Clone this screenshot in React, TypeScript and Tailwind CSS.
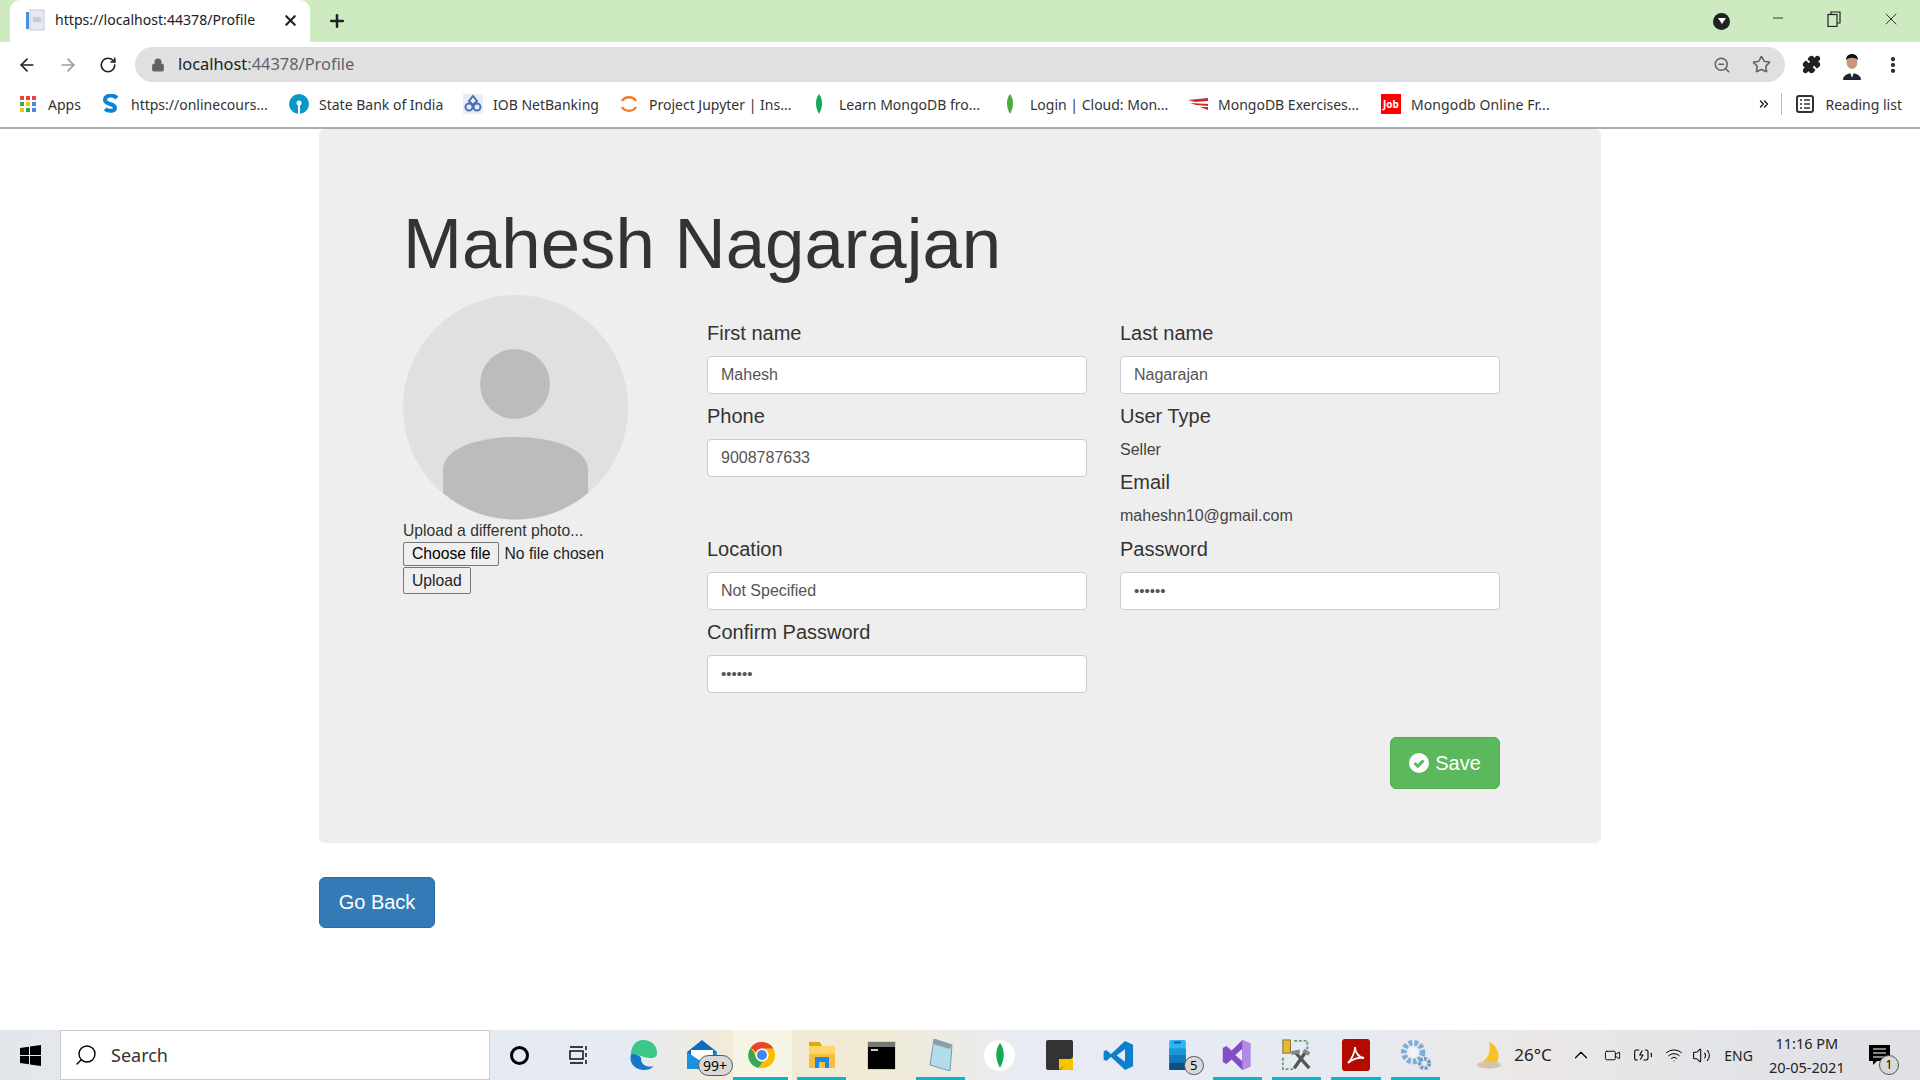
import { ArrowLeft, ArrowRight, ChevronUp, Lock, MoreVertical, Plus, RotateCw, Search, Star, Volume2, Wifi, X, ZoomOut, Minus, ChevronsRight, Puzzle, Video, BatteryCharging } from "lucide-react";
import type { ReactNode } from "react";

const ui = "font-['Noto_Sans','Open_Sans',sans-serif]";

const bookmarks: { label: string; box: string; icon: ReactNode }[] = [
  {
    label: "Apps",
    box: "w-[33px] mr-[20px]",
    icon: (
      <svg width="18" height="18" viewBox="0 0 18 18">
        <rect x="1" y="1" width="4" height="4" fill="#ea4335" />
        <rect x="7" y="1" width="4" height="4" fill="#ea4335" />
        <rect x="13" y="1" width="4" height="4" fill="#ea4335" />
        <rect x="1" y="7" width="4" height="4" fill="#34a853" />
        <rect x="7" y="7" width="4" height="4" fill="#fbbc05" />
        <rect x="13" y="7" width="4" height="4" fill="#4285f4" />
        <rect x="1" y="13" width="4" height="4" fill="#fbbc05" />
        <rect x="7" y="13" width="4" height="4" fill="#34a853" />
        <rect x="13" y="13" width="4" height="4" fill="#4285f4" />
      </svg>
    ),
  },
  {
    label: "https://onlinecours...",
    box: "w-[137px] mr-[21px]",
    icon: (
      <svg width="18" height="20" viewBox="0 0 18 20">
        <path d="M15 4 C11 0 3 1 3 6 C3 11 13 9 13 14 C13 17 7 18 3 15" fill="none" stroke="#0a84d6" strokeWidth="4" />
      </svg>
    ),
  },
  {
    label: "State Bank of India",
    box: "w-[124px] mr-[20px]",
    icon: (
      <svg width="20" height="20" viewBox="0 0 20 20">
        <circle cx="10" cy="10" r="10" fill="#0a98c9" />
        <circle cx="10" cy="9" r="2.5" fill="#fff" />
        <rect x="9" y="10" width="2" height="10" fill="#fff" />
      </svg>
    ),
  },
  {
    label: "IOB NetBanking",
    box: "w-[106px] mr-[20px]",
    icon: (
      <svg width="20" height="20" viewBox="0 0 20 20">
        <rect width="20" height="20" fill="#e8edf5" />
        <path d="M10 2 L14 7 L10 11 L6 7 Z" fill="none" stroke="#4a6fb5" strokeWidth="2" />
        <circle cx="6" cy="13" r="3.5" fill="none" stroke="#4a6fb5" strokeWidth="2" />
        <circle cx="14" cy="13" r="3.5" fill="none" stroke="#4a6fb5" strokeWidth="2" />
      </svg>
    ),
  },
  {
    label: "Project Jupyter | Ins...",
    box: "w-[140px] mr-[20px]",
    icon: (
      <svg width="20" height="20" viewBox="0 0 20 20">
        <path d="M3 7 C6 2 14 2 17 7" fill="none" stroke="#f37726" strokeWidth="2.4" />
        <path d="M3 13 C6 18 14 18 17 13" fill="none" stroke="#f37726" strokeWidth="2.4" />
      </svg>
    ),
  },
  {
    label: "Learn MongoDB fro...",
    box: "w-[142px] mr-[19px]",
    icon: (
      <svg width="20" height="20" viewBox="0 0 20 20">
        <path d="M10 0 C14 5 14 13 10 20 C6 13 6 5 10 0 Z" fill="#13aa52" />
      </svg>
    ),
  },
  {
    label: "Login | Cloud: Mon...",
    box: "w-[137px] mr-[21px]",
    icon: (
      <svg width="20" height="20" viewBox="0 0 20 20">
        <path d="M10 0 C14 5 14 13 10 20 C6 13 6 5 10 0 Z" fill="#4fa83d" />
      </svg>
    ),
  },
  {
    label: "MongoDB Exercises...",
    box: "w-[141px] mr-[22px]",
    icon: (
      <svg width="20" height="20" viewBox="0 0 20 20">
        <path d="M0 6 L20 4 L20 7 L7 8 Z M2 9 L20 10 L20 12 L8 11 Z M12 13 L20 13 L20 16 Z" fill="#d8232a" />
      </svg>
    ),
  },
  {
    label: "Mongodb Online Fr...",
    box: "w-[141px] tracking-[0.1px]",
    icon: (
      <div className="flex h-[20px] w-[20px] items-center justify-center bg-[#ff0000] text-[10px] font-bold text-white">Job</div>
    ),
  },
];

function AppSlot({ children, on = false, tint = false }: { children: ReactNode; on?: boolean; tint?: boolean }) {
  return (
    <div className={`relative flex h-[50px] w-[59.4px] shrink-0 items-center justify-center ${tint ? "bg-[#f6f4e4]" : ""}`}>
      {children}
      {on && <div className={`absolute bottom-0 h-[3px] bg-[#0db4c4] ${tint ? "left-0 right-[4px]" : "left-[5px] right-[5px]"}`} />}
    </div>
  );
}

function Field({ label, value, password = false }: { label: string; value: string; password?: boolean }) {
  return (
    <div className="mb-[9px]">
      <label className="mb-[9px] block text-[20px] leading-[27px] text-[#333]">{label}</label>
      <div className={`flex h-[38px] items-center rounded-[4px] border border-[#ccc] bg-white px-[13px] text-[#555] ${password ? "text-[15px]" : "text-[16px]"}`}>
        {password ? "••••••" : value}
      </div>
    </div>
  );
}

function Browser() {
  return (
    <div className={`${ui} shrink-0 text-[#202124]`}>
      <div className="flex h-[42px] items-end bg-[#cdeac0]">
        <div className="ml-[10px] flex h-[42px] w-[300px] items-center rounded-t-[10px] bg-white pb-[2px] pl-[15px] pr-[11px]">
          <svg width="20" height="22" viewBox="0 0 20 22" className="shrink-0">
            <rect x="1" y="3" width="3" height="17" fill="#4a90d9" />
            <rect x="5" y="1" width="14" height="20" fill="#e4e9f0" stroke="#c3ccd8" />
            <rect x="8" y="8" width="8" height="5" fill="#c3ccd8" />
          </svg>
          <span className="ml-[10px] flex-1 text-[14.1px] whitespace-nowrap">https://localhost:44378/Profile</span>
          <X size={17} strokeWidth={3} />
        </div>
        <div className="ml-[12px] flex h-[42px] w-[30px] items-center justify-center">
          <Plus size={20} strokeWidth={3} />
        </div>
        <div className="flex-1" />
        <div className="flex h-[42px] items-center">
          <div className="mr-[20px] flex h-[17px] w-[17px] items-center justify-center rounded-full bg-[#202124]">
            <div className="h-0 w-0 border-x-[4px] border-t-[6px] border-x-transparent border-t-white" />
          </div>
          <div className="-mt-[6px] flex w-[56px] justify-center"><Minus size={16} strokeWidth={1.3} /></div>
          <div className="-mt-[5px] flex w-[56px] justify-center">
            <svg width="14" height="16" viewBox="0 0 14 16" fill="none" stroke="#202124" strokeWidth="1.2">
              <rect x="1" y="3.5" width="9" height="12" />
              <path d="M4 3.5 V1 H13 V12 H10" />
            </svg>
          </div>
          <div className="-mt-[5px] flex w-[58px] justify-center"><X size={20} strokeWidth={1.1} /></div>
        </div>
      </div>
      <div className="flex h-[45px] items-center bg-white">
        <div className="flex w-[135px] items-center gap-[21px] pl-[17px]">
          <ArrowLeft size={20} strokeWidth={2} />
          <ArrowRight size={20} strokeWidth={2} className="text-[#9a9a9a]" />
          <RotateCw size={18} strokeWidth={2.2} />
        </div>
        <div className="flex h-[35px] flex-1 items-center rounded-full bg-[#e0e0e0] pl-[16px] pr-[14px]">
          <Lock size={14} fill="#5f6368" className="text-[#5f6368]" />
          <span className="ml-[13px] flex-1 text-[16.4px]">
            localhost<span className="text-[#5f6368]">:44378/Profile</span>
          </span>
          <ZoomOut size={18} className="mr-[21px] text-[#5f6368]" />
          <Star size={19} className="text-[#5f6368]" />
        </div>
        <div className="flex w-[135px] items-center justify-around px-[8px]">
          <Puzzle size={19} fill="#202124" />
          <svg width="24" height="30" viewBox="0 0 24 30">
            <circle cx="12" cy="15" r="12" fill="#fff" />
            <ellipse cx="12" cy="12" rx="5.5" ry="7" fill="#c9977c" />
            <path d="M6 10 C6 2 18 2 18 10 C15 7 9 7 6 10 Z" fill="#111" />
            <path d="M3 30 C3 21 21 21 21 30 Z" fill="#1d2430" />
            <path d="M10 22 L14 22 L12 28 Z" fill="#fff" />
          </svg>
          <MoreVertical size={20} strokeWidth={3} />
        </div>
      </div>
      <div className="flex h-[42px] items-center border-b-[2px] border-[#aaa] bg-white pb-[6px] pl-[18px]">
        {bookmarks.map((b) => (
          <div key={b.label} className="flex items-center">
            <div className="flex w-[20px] items-center justify-center">{b.icon}</div>
            <span className={`ml-[10px] text-[14px] whitespace-nowrap text-[#333] ${b.box}`}>{b.label}</span>
          </div>
        ))}
        <div className="flex-1" />
        <ChevronsRight size={14} strokeWidth={2.5} />
        <div className="ml-[10px] mr-[14px] h-[22px] w-px bg-[#bbb]" />
        <svg width="18" height="18" viewBox="0 0 18 18">
          <rect x="1" y="1" width="16" height="16" rx="2" fill="none" stroke="#333" strokeWidth="2" />
          <path d="M4 5h2M8 5h6M4 9h2M8 9h6M4 13h2M8 13h6" stroke="#333" strokeWidth="1.5" />
        </svg>
        <span className="ml-[11px] mr-[18px] text-[14px] text-[#333]">Reading list</span>
      </div>
    </div>
  );
}

function Taskbar() {
  return (
    <div className={`${ui} flex h-[50px] shrink-0 items-center bg-[linear-gradient(90deg,#e3e6ea_0%,#e6eaf2_30%,#e6eaf2_33%,#f1ebd8_38%,#f0ead6_46%,#e8ebf2_53%,#e6eaf2_70%,#ebe7e6_80%,#e2e4e8_90%,#dfe0e4_100%)] text-black`}>
      <div className="flex w-[60px] justify-center">
        <svg width="21" height="21" viewBox="0 0 21 21">
          <path d="M0 3 L9 1.7 V10 H0 Z M10 1.5 L21 0 V10 H10 Z M0 11 H9 V19.3 L0 18 Z M10 11 H21 V21 L10 19.5 Z" fill="#000" />
        </svg>
      </div>
      <div className="flex h-[50px] w-[430px] items-center border border-[#ccc] bg-white pl-[13px]">
        <Search size={24} strokeWidth={1.4} className="-scale-x-100" />
        <span className="ml-[13px] text-[18px] text-[#333]">Search</span>
      </div>
      <AppSlot>
        <div className="h-[19px] w-[19px] rounded-full border-[3px] border-black" />
      </AppSlot>
      <AppSlot>
        <svg width="20" height="20" viewBox="0 0 20 20" fill="none" stroke="#000" strokeWidth="1.4">
          <rect x="1" y="6" width="13" height="8" />
          <path d="M1 2h13M1 18h13M17 1v4M17 8v4M17 15v4" />
        </svg>
      </AppSlot>
      <div className="w-[5px] shrink-0" />
      <AppSlot>
        <svg width="32" height="32" viewBox="0 0 32 34">
          <path d="M16 1 C26 1 31 8 31 15 C31 20 26 21 21 20 C13 19 8 14 3 18 C3 8 8 1 16 1 Z" fill="#3cc68a" />
          <path d="M3 17 C1 27 9 33 17 33 C21 33 25 32 27 29 C20 31 13 27 14 20 C10 16 6 15 3 17 Z" fill="#1577c9" />
        </svg>
      </AppSlot>
      <AppSlot>
        <svg width="32" height="30" viewBox="0 0 32 30" className="-ml-[2px] -mt-[2px]">
          <path d="M1 13 L16 1 L31 13 V30 H1 Z" fill="#0f6cbd" />
          <path d="M5 11 H27 V22 H5 Z" fill="#fff" />
          <path d="M1 13 L16 23 L31 13 V30 H1 Z" fill="#1e90e0" />
        </svg>
        <div className="absolute bottom-[4px] right-0 flex h-[21px] w-[35px] items-center justify-center rounded-full border border-[#555] bg-[#d8d8d8] text-[14px] leading-none text-black">
          99+
        </div>
      </AppSlot>
      <AppSlot tint on>
        <svg width="28" height="28" viewBox="0 0 30 30">
          <circle cx="15" cy="15" r="14" fill="#fbbc05" />
          <path d="M15 1 A14 14 0 0 1 27.1 8 H15 A7 7 0 0 0 8.6 11.9 L3 7 A14 14 0 0 1 15 1 Z" fill="#ea4335" />
          <path d="M3 7 L9 18 A7 7 0 0 0 16 22 L11 29 A14 14 0 0 1 3 7 Z" fill="#34a853" />
          <circle cx="15" cy="15" r="7" fill="#fff" />
          <circle cx="15" cy="15" r="5.4" fill="#4285f4" />
        </svg>
      </AppSlot>
      <AppSlot on>
        <svg width="28" height="28" viewBox="0 0 28 28">
          <path d="M1 1 H12 L14 5 H1 Z" fill="#e3a51a" />
          <rect x="1" y="5" width="26" height="10" fill="#ffd566" />
          <rect x="1" y="13" width="26" height="14" fill="#f7bf3e" />
          <path d="M7 16 H21 V27 H17 V21 H11 V27 H7 Z" fill="#1e88e5" />
        </svg>
      </AppSlot>
      <AppSlot>
        <div className="h-[27px] w-[27px] border-t-[5px] border-[#777] bg-black shadow-[0_0_1px_#555]">
          <div className="ml-[3px] mt-[2px] h-[2px] w-[7px] bg-[#ccc]" />
        </div>
      </AppSlot>
      <AppSlot on>
        <svg width="28" height="32" viewBox="0 0 28 32">
          <path d="M8 0 L26 6 L24 32 L4 26 Z" fill="#b3dcea" stroke="#7a9aa8" />
          <path d="M8 0 L26 6 L24 10 L7 5 Z" fill="#8aa0a8" />
        </svg>
      </AppSlot>
      <AppSlot>
        <div className="flex h-[31px] w-[31px] items-center justify-center rounded-full bg-white">
          <svg width="12" height="25" viewBox="0 0 12 25">
            <path d="M6 0 C11 6 11 16 6 25 C1 16 1 6 6 0 Z" fill="#13aa52" />
          </svg>
        </div>
      </AppSlot>
      <AppSlot>
        <svg width="27" height="30" viewBox="0 0 27 30">
          <rect width="27" height="30" rx="2" fill="#333" />
          <path d="M14 30 L27 17 V28 A2 2 0 0 1 25 30 Z" fill="#f7c400" />
          <path d="M13 30 V19 H27 Z" fill="#f7c400" />
        </svg>
      </AppSlot>
      <AppSlot>
        <svg width="31" height="31" viewBox="0 0 100 100">
          <path d="M71 3 L97 15 V85 L71 97 L26 55 L10 68 L2 63 V37 L10 32 L26 45 Z M71 30 L44 50 L71 70 Z" fill="#0e7fcf" />
        </svg>
      </AppSlot>
      <AppSlot>
        <svg width="19" height="30" viewBox="0 0 20 36">
          <rect width="20" height="36" rx="2" fill="#29b6f6" />
          <rect y="10" width="20" height="8" fill="#1e96dc" />
          <rect y="18" width="20" height="9" fill="#1277bc" />
          <rect y="27" width="20" height="9" fill="#0c4f87" />
          <rect x="6" y="2" width="8" height="2" fill="#0c4f87" />
        </svg>
        <div className="absolute bottom-[5px] right-[4px] flex h-[19px] w-[20px] items-center justify-center rounded-full border border-[#555] bg-[#d8d8d8] text-[13px] leading-none text-black">
          5
        </div>
      </AppSlot>
      <AppSlot on>
        <svg width="32" height="32" viewBox="0 0 32 36">
          <path d="M22 1 L31 5 V31 L22 35 L10 23 L4 28 L0 26 V10 L4 8 L10 13 Z M22 11 L14 18 L22 25 Z" fill="#854cc7" />
          <path d="M22 1 L31 5 V31 L22 35 V25 V11 Z" fill="#b28be4" />
        </svg>
      </AppSlot>
      <AppSlot on>
        <svg width="32" height="32" viewBox="0 0 34 34">
          <rect x="2" y="1" width="8" height="14" fill="#e7b93a" stroke="#8a6d1a" />
          <path d="M14 2h14v14M2 20v12h12" fill="none" stroke="#6e9a6a" strokeWidth="2" strokeDasharray="3 2" />
          <path d="M14 31 L26 14 M15 14 L30 31" stroke="#555" strokeWidth="3.5" />
          <path d="M11 15 L20 13 M24 12 L30 16" stroke="#888" strokeWidth="4" />
        </svg>
      </AppSlot>
      <AppSlot on>
        <div className="flex h-[32px] w-[28px] items-center justify-center rounded-[3px] bg-[#b30b00]">
          <svg width="20" height="20" viewBox="0 0 20 20" fill="none" stroke="#fff" strokeWidth="1.8">
            <path d="M2 18 C6 14 9 7 9 2 C9 7 13 13 18 13 C13 12 6 14 2 18 Z" />
          </svg>
        </div>
      </AppSlot>
      <AppSlot on>
        <svg width="32" height="32" viewBox="0 0 34 34">
          <circle cx="14" cy="14" r="10" fill="none" stroke="#7eaed6" strokeWidth="6" strokeDasharray="4 2" />
          <circle cx="14" cy="14" r="5" fill="#f0f4f8" />
          <circle cx="26" cy="26" r="5" fill="none" stroke="#6d9cc4" strokeWidth="4" strokeDasharray="3 1.5" />
        </svg>
      </AppSlot>
      <div className="ml-[29px] flex items-center">
        <svg width="30" height="30" viewBox="0 0 30 30">
          <path d="M15 2 C25 6 27 18 22 24 L3 24 C12 22 18 14 15 2 Z" fill="#f6c324" />
          <ellipse cx="15" cy="25" rx="12" ry="3.5" fill="#d2c4ae" />
        </svg>
        <span className="ml-[10px] w-[45px] text-[17px] text-[#222]">26°C</span>
        <ChevronUp size={22} strokeWidth={1.3} className="ml-[11px]" />
        <Video size={17} strokeWidth={1.3} className="ml-[12px]" />
        <BatteryCharging size={20} strokeWidth={1.3} className="ml-[12px]" />
        <Wifi size={18} strokeWidth={1.3} className="ml-[12px]" />
        <Volume2 size={19} strokeWidth={1.3} className="ml-[9px]" />
        <span className="ml-[13px] text-[14px] text-[#222]">ENG</span>
      </div>
      <div className="ml-[14px] flex w-[80px] flex-col items-center text-[14.5px] leading-[24px] text-[#222]">
        <span>11:16 PM</span>
        <span>20-05-2021</span>
      </div>
      <div className="relative ml-[22px] flex h-[50px] w-[32px] items-start pt-[15px]">
        <svg width="21" height="20" viewBox="0 0 21 20">
          <path d="M0 0 H21 V16 H8 L4 20 V16 H0 Z" fill="#000" />
          <path d="M4 4h13M4 8h13M4 12h13" stroke="#fff" strokeWidth="1.2" />
        </svg>
        <div className="absolute bottom-[5px] left-[10px] flex h-[20px] w-[20px] items-center justify-center rounded-full border border-[#555] bg-[#d8d8d8] text-[12px]">
          1
        </div>
      </div>
    </div>
  );
}

export default function App() {
  return (
    <div className="flex h-screen flex-col overflow-hidden bg-white">
      <Browser />
      <div className="flex-1 font-['Liberation_Sans',sans-serif] text-[#333]">
        <div className="mx-auto w-[1282px]">
          <div className="h-[714px] rounded-[6px] bg-[#eeeeee] pl-[84px] pr-[101px] pt-[75px]">
            <h1 className="mb-[12px] text-[70.8px] leading-[79px] text-[#333]">Mahesh Nagarajan</h1>
            <div className="flex">
              <div className="w-[304px]">
                <svg width="225" height="225" viewBox="0 0 225 225" className="block">
                  <circle cx="112.5" cy="112.5" r="112.5" fill="#e0e0e0" />
                  <circle cx="112" cy="89" r="35" fill="#bcbcbc" />
                  <path d="M40 198 V175 C40 131 185 131 185 175 V198 A112.5 112.5 0 0 1 40 198 Z" fill="#bcbcbc" />
                </svg>
                <div className="mt-[2px] text-[15.7px] leading-[18px] text-[#333]">Upload a different photo...</div>
                <div className="mt-[2px] flex items-center text-[15.7px] leading-[22px] text-[#222]">
                  <span className="rounded-[2px] border border-[#767676] bg-[#efefef] px-[8px] text-black">Choose file</span>
                  <span className="ml-[5px]">No file chosen</span>
                </div>
                <span className="mt-[1px] inline-block rounded-[2px] border border-[#767676] bg-[#efefef] px-[8px] text-[15.7px] leading-[25px] text-[#222]">Upload</span>
              </div>
              <div className="pt-[25px]">
                <div className="grid grid-cols-[380px_380px] gap-x-[33px]">
                  <Field label="First name" value="Mahesh" />
                  <Field label="Last name" value="Nagarajan" />
                  <div className="h-[133px]">
                    <Field label="Phone" value="9008787633" />
                  </div>
                  <div className="h-[133px] text-[16px]">
                    <div className="text-[20px] leading-[26px]">User Type</div>
                    <div className="mt-[10px] leading-[22px] text-[#444]">Seller</div>
                    <div className="mt-[8px] text-[20px] leading-[26px]">Email</div>
                    <div className="mt-[10px] leading-[22px] text-[#444]">maheshn10@gmail.com</div>
                  </div>
                  <Field label="Location" value="Not Specified" />
                  <Field label="Password" value="" password />
                  <Field label="Confirm Password" value="" password />
                </div>
                <div className="mt-[35px] flex justify-end">
                  <button className="flex h-[52px] w-[110px] items-center justify-center rounded-[6px] border border-[#4cae4c] bg-[#5cb85c] pb-[1px] text-[20px] text-white">
                    <svg width="20" height="20" viewBox="0 0 20 20" className="mr-[6px]">
                      <circle cx="10" cy="10" r="10" fill="#fff" />
                      <path d="M5.5 10 L8.8 13.2 L14.5 7.5" fill="none" stroke="#5cb85c" strokeWidth="3" />
                    </svg>
                    Save
                  </button>
                </div>
              </div>
            </div>
          </div>
          <button className="mt-[34px] h-[51px] w-[116px] rounded-[6px] border border-[#2e6da4] bg-[#337ab7] pb-[2px] text-[20px] text-white">Go Back</button>
        </div>
      </div>
      <Taskbar />
    </div>
  );
}
